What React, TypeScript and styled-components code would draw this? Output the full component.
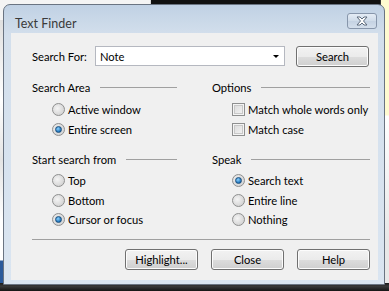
import styled, { createGlobalStyle } from 'styled-components'

const Global = createGlobalStyle`
    html, body { margin: 0; padding: 0; }
    body {
        width: 389px;
        height: 291px;
        overflow: hidden;
        font-family: Lato, "Liberation Sans", sans-serif;
        font-size: 11.2px;
        color: #000;
    }
`

const Desktop = styled.div`
    position: relative;
    width: 389px;
    height: 291px;
    overflow: hidden;
    background: #f4f4f4;
    white-space: nowrap;
`

const TopStrip = styled.div`
    position: absolute;
    top: 0;
    left: 150px;
    width: 235px;
    height: 12px;
    background: #111;
    border-left: 1px solid #d8d8d8;
`

const RightStrip = styled.div`
    position: absolute;
    top: 0;
    right: 0;
    width: 8px;
    height: 291px;
    background: linear-gradient(#fffbd0 0, #fffbd0 115px, #fff 116px, #e8e8e8 240px);
    border-left: 1px solid #333;
`

const LeftStrip = styled.div`
    position: absolute;
    top: 20px;
    left: 0;
    width: 6px;
    height: 271px;
    background: linear-gradient(#e0e0e0 0, #fff 80px, #e4e4e4 140px, #fff 200px, #fff 240px, #2a5a9c 241px);
    border-right: 1px solid #555;
`

const Taskbar = styled.div`
    position: absolute;
    left: 0;
    bottom: 0;
    width: 389px;
    height: 8px;
    background: linear-gradient(#1a1a1a, #3a3a3a 40%, #151515);
`

const Window = styled.div`
    position: absolute;
    left: 3px;
    top: 4px;
    width: 382px;
    height: 281px;
    box-sizing: border-box;
    border: 1px solid #6a7482;
    border-radius: 7px 7px 0 0;
    background: linear-gradient(#c0d1e4 0, #d3dfec 30px, #dae5f1 100%);
    display: flex;
    flex-direction: column;
    padding: 0 6px 4px 7px;
`

const TitleBar = styled.div`
    height: 28px;
    display: flex;
    align-items: center;
    justify-content: space-between;
    padding-left: 4px;
`

const Title = styled.span`
    font-size: 12.5px;
    color: #3a3a3a;
    margin-top: 8px;
`

const CloseBox = styled.div`
    width: 30px;
    height: 16px;
    margin-top: 4px;
    margin-right: 1px;
    box-sizing: border-box;
    border: 1px solid #8796ab;
    border-radius: 3px;
    background: linear-gradient(#e4ecf5, #cfdbe9 50%, #c4d2e3 51%, #d4dfec);
    display: flex;
    align-items: center;
    justify-content: center;
`

const Client = styled.div`
    flex: 1;
    background: #f0f0f0;
    padding: 13px 8px 0 21px;
    display: flex;
    flex-direction: column;
`

const SearchRow = styled.div`
    display: flex;
    align-items: center;
    height: 20px;
`

const Label = styled.span`
    width: 63px;
`

const Combo = styled.div`
    width: 190px;
    height: 20px;
    box-sizing: border-box;
    border: 1px solid #b5b8c0;
    background: #fff;
    display: flex;
    align-items: center;
    justify-content: space-between;
    padding: 0 5px 0 4px;
`

const Arrow = styled.span`
    width: 0;
    height: 0;
    border-left: 3px solid transparent;
    border-right: 3px solid transparent;
    border-top: 3px solid #000;
    margin-top: 1px;
`

const Button = styled.div<{ $w?: number }>`
    width: ${p => p.$w ?? 73}px;
    height: 21px;
    box-sizing: border-box;
    border: 1px solid #707070;
    border-radius: 3px;
    background: linear-gradient(#f2f2f2 0, #ebebeb 50%, #dddddd 51%, #cfcfcf 100%);
    box-shadow: inset 0 0 0 1px #fcfcfc;
    display: flex;
    align-items: center;
    justify-content: center;
`

const Groups = styled.div`
    display: grid;
    grid-template-columns: 145px 158px;
    column-gap: 35px;
    margin-top: 14px;
`

const Group = styled.div<{ $top?: number }>`
    display: flex;
    flex-direction: column;
    margin-top: ${p => p.$top ?? 0}px;
`

const Header = styled.div`
    display: flex;
    align-items: center;
    height: 14px;
    margin-bottom: 5px;
    &::after {
        content: '';
        flex: 1;
        height: 1px;
        background: #a0a0a0;
        margin-left: 10px;
        margin-top: 1px;
    }
`

const Item = styled.div<{ $h?: number }>`
    display: flex;
    align-items: center;
    height: ${p => p.$h ?? 20}px;
    padding-left: 20px;
`

const RadioDot = styled.span<{ $on?: boolean }>`
    flex-shrink: 0;
    width: 13px;
    height: 13px;
    box-sizing: border-box;
    border-radius: 50%;
    border: 1px solid #8e8f8f;
    background: radial-gradient(circle at 40% 40%, #f4f4f4, #d6d6d6 70%, #e8e8e8);
    display: flex;
    align-items: center;
    justify-content: center;
    margin-right: 3px;
    &::after {
        content: '';
        display: ${p => (p.$on ? 'block' : 'none')};
        width: 5px;
        height: 5px;
        border-radius: 50%;
        background: radial-gradient(circle at 40% 35%, #8ed3ff, #1a70b8 70%, #0d4f8c);
        border: 1px solid #1d4f7c;
    }
`

const CheckBox = styled.span`
    flex-shrink: 0;
    width: 13px;
    height: 13px;
    box-sizing: border-box;
    border: 1px solid #8e8f8f;
    background: linear-gradient(135deg, #d8d8d8, #f6f6f6);
    box-shadow: inset 0 0 0 1px #f4f4f4, inset 0 0 0 2px #c8c8c8;
    margin-right: 3px;
`

const Separator = styled.div`
    height: 1px;
    background: #a0a0a0;
    margin: 9px 0 9px 0;
`

const ButtonRow = styled.div`
    display: flex;
    justify-content: flex-end;
    gap: 13px;
`

const Radio = ({ label, on, h }: { label: string; on?: boolean; h?: number }) => (
    <Item $h={h}>
        <RadioDot $on={on} />
        {label}
    </Item>
)

const Check = ({ label }: { label: string }) => (
    <Item>
        <CheckBox />
        {label}
    </Item>
)

const App = () => {
    return (
        <Desktop>
            <Global />
            <TopStrip />
            <LeftStrip />
            <RightStrip />
            <Taskbar />
            <Window>
                <TitleBar>
                    <Title>Text Finder</Title>
                    <CloseBox>
                        <svg width="14" height="10" viewBox="0 0 14 10">
                            <path d="M2 1 L5 1 L7 3 L9 1 L12 1 L8.5 5 L12 9 L9 9 L7 7 L5 9 L2 9 L5.5 5 Z" fill="#fff" stroke="#5d6b7d" strokeWidth="1" strokeLinejoin="round" />
                        </svg>
                    </CloseBox>
                </TitleBar>
                <Client>
                    <SearchRow>
                        <Label>Search For:</Label>
                        <Combo>
                            Note
                            <Arrow />
                        </Combo>
                        <Button style={{ marginLeft: 11 }}>Search</Button>
                    </SearchRow>
                    <Groups>
                        <Group>
                            <Header>Search Area</Header>
                            <Radio label="Active window" />
                            <Radio label="Entire screen" on />
                        </Group>
                        <Group>
                            <Header>Options</Header>
                            <Check label="Match whole words only" />
                            <Check label="Match case" />
                        </Group>
                        <Group $top={13}>
                            <Header>Start search from</Header>
                            <Radio label="Top" h={19.5} />
                            <Radio label="Bottom" h={19.5} />
                            <Radio label="Cursor or focus" on h={19.5} />
                        </Group>
                        <Group $top={13}>
                            <Header>Speak</Header>
                            <Radio label="Search text" on h={19.5} />
                            <Radio label="Entire line" h={19.5} />
                            <Radio label="Nothing" h={19.5} />
                        </Group>
                    </Groups>
                    <Separator />
                    <ButtonRow>
                        <Button>Highlight...</Button>
                        <Button>Close</Button>
                        <Button>Help</Button>
                    </ButtonRow>
                </Client>
            </Window>
        </Desktop>
    )
}

export default App
